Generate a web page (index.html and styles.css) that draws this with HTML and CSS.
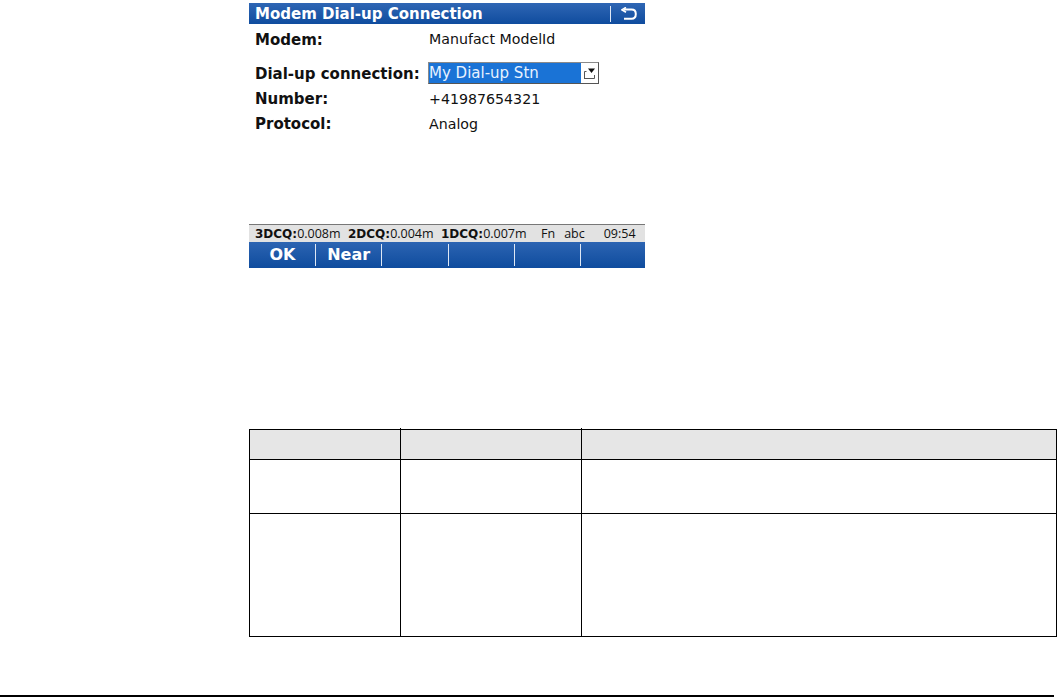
FILE: index.html
```html
<!DOCTYPE html>
<html lang="en">
<head>
<meta charset="utf-8">
<title>Modem Dial-up Connection</title>
<link rel="stylesheet" href="styles.css">
</head>
<body>
<div class="page">
  <section class="screen">
    <header class="titlebar">
      <span class="title">Modem Dial-up Connection</span>
      <span class="back">
        <svg width="16" height="14" viewBox="0 0 16 14"><path d="M3 2.6H10.5C13.4 2.6 14.8 4.4 14.8 7S13.4 11.8 10.5 11.8H3" fill="none" stroke="#fff" stroke-width="2"/><path d="M5 0.4L1 2.8L5 5.2" fill="none" stroke="#fff" stroke-width="1.7"/></svg>
      </span>
    </header>
    <div class="content">
      <div class="row first"><span class="label">Modem:</span><span class="value">Manufact ModelId</span></div>
      <div class="row select-row">
        <span class="label">Dial-up connection:</span>
        <span class="select"><span class="selected">My Dial-up Stn</span>
          <span class="drop"><svg width="13" height="13" viewBox="0 0 13 13"><path d="M1.5 12V4.5H3.5M1.5 11.5H11.5V8" fill="none" stroke="#555" stroke-width="1"/><path d="M5 1.5H12L8.5 6Z" fill="#111"/></svg></span>
        </span>
      </div>
      <div class="row"><span class="label">Number:</span><span class="value">+41987654321</span></div>
      <div class="row"><span class="label">Protocol:</span><span class="value">Analog</span></div>
    </div>
    <div class="status">
      <span class="q"><b>3DCQ:</b>0.008m</span>
      <span class="q"><b>2DCQ:</b>0.004m</span>
      <span class="q"><b>1DCQ:</b>0.007m</span>
      <span class="fn">Fn</span><span class="abc">abc</span><span class="time">09:54</span>
    </div>
    <nav class="keys">
      <span class="key">OK</span><span class="key">Near</span><span class="key"></span><span class="key"></span><span class="key"></span><span class="key"></span>
    </nav>
  </section>
  <table class="grid">
    <colgroup><col class="c1"><col class="c2"><col class="c3"></colgroup>
    <thead><tr class="h"><th></th><th class="tick"></th><th class="tick"></th></tr></thead>
    <tbody>
      <tr class="r1"><td></td><td></td><td></td></tr>
      <tr class="r2"><td></td><td></td><td></td></tr>
    </tbody>
  </table>
  <div class="footer-line"></div>
</div>
</body>
</html>
```
FILE: styles.css
```css
html, body { margin: 0; padding: 0; background: #fff; }
body { width: 1057px; height: 697px; overflow: hidden; }
.page { display: flex; flex-direction: column; height: 697px; }
.screen {
  width: 396px; margin: 3px 0 0 249px; height: 265px;
  display: flex; flex-direction: column;
  font-family: "DejaVu Sans", sans-serif; color: #111;
}
.titlebar {
  height: 21px; flex: none; display: flex; align-items: center; justify-content: space-between;
  background: linear-gradient(#2f66b4, #0f4c9e);
  color: #fff;
}
.title { font-weight: 700; font-size: 15px; margin-left: 6px; }
.back { display: flex; align-items: center; height: 16px; border-left: 1px solid #dfe8f5; padding: 0 8px 0 10px; }
.content { flex: 1; display: flex; flex-direction: column; padding: 3px 0 0 6px; }
.row { display: flex; align-items: center; height: 25px; font-size: 14px; }
.first { height: 25px; }
.select-row { margin-top: 10px; height: 24px; }
.label { width: 174px; font-weight: 700; font-size: 15px; flex: none; white-space: nowrap; }
.first .value { margin-bottom: 1px; }
.value { font-size: 14.2px; }
.select {
  display: flex; width: 169px; height: 20px; margin: 0 0 2px -1px;
  border: 1px solid #8a8a8a; border-right-color: #555; border-bottom-color: #555; background: #fff;
}
.selected { flex: 1; background: #1a73d6; color: #e8f2ff; font-size: 15px; line-height: 20px; }
.drop { width: 17px; display: flex; align-items: center; justify-content: center; }
.status {
  height: 18px; flex: none; display: flex; align-items: center;
  background: #e2e2e2; border-top: 1px solid #777; box-sizing: border-box;
  font-size: 12.5px; padding-left: 6px; white-space: nowrap;
  font-family: "Open Sans", sans-serif;
}
.status b { font-family: "DejaVu Sans", sans-serif; font-size: 12px; }
.q { width: 93px; }
.fn { margin-left: 7px; }
.abc { margin-left: 9px; }
.time { margin-left: 19px; }
.keys {
  height: 26px; flex: none; display: grid; grid-template-columns: repeat(6, 66.25px);
  background: linear-gradient(#2c64b2, #0f4c9e);
  padding-left: 0.75px;
}
.key {
  color: #fff; font-weight: 700; font-size: 16px; text-align: center;
  border-right: 1px solid #dfe8f5; height: 22px; margin-top: 2px; line-height: 22px; box-sizing: border-box;
}
.key:last-child { border-right: 0; }
.grid {
  margin: 161px 0 0 249px; width: 808px; height: 208px;
  border-collapse: collapse; table-layout: fixed; flex: none;
}
.grid th, .grid td { border: 1px solid #000; padding: 0; }
.grid th { background: #e6e6e6; }
.tick { position: relative; }
.tick::before { content: ""; position: absolute; left: -1px; top: -2px; width: 1px; height: 2px; background: #000; }
.c1 { width: 151px; }
.c2 { width: 181px; }
.h { height: 30px; }
.r1 { height: 54px; }
.r2 { height: 123px; }
.footer-line { margin-top: auto; height: 2px; width: 1054px; background: #000; }
```
